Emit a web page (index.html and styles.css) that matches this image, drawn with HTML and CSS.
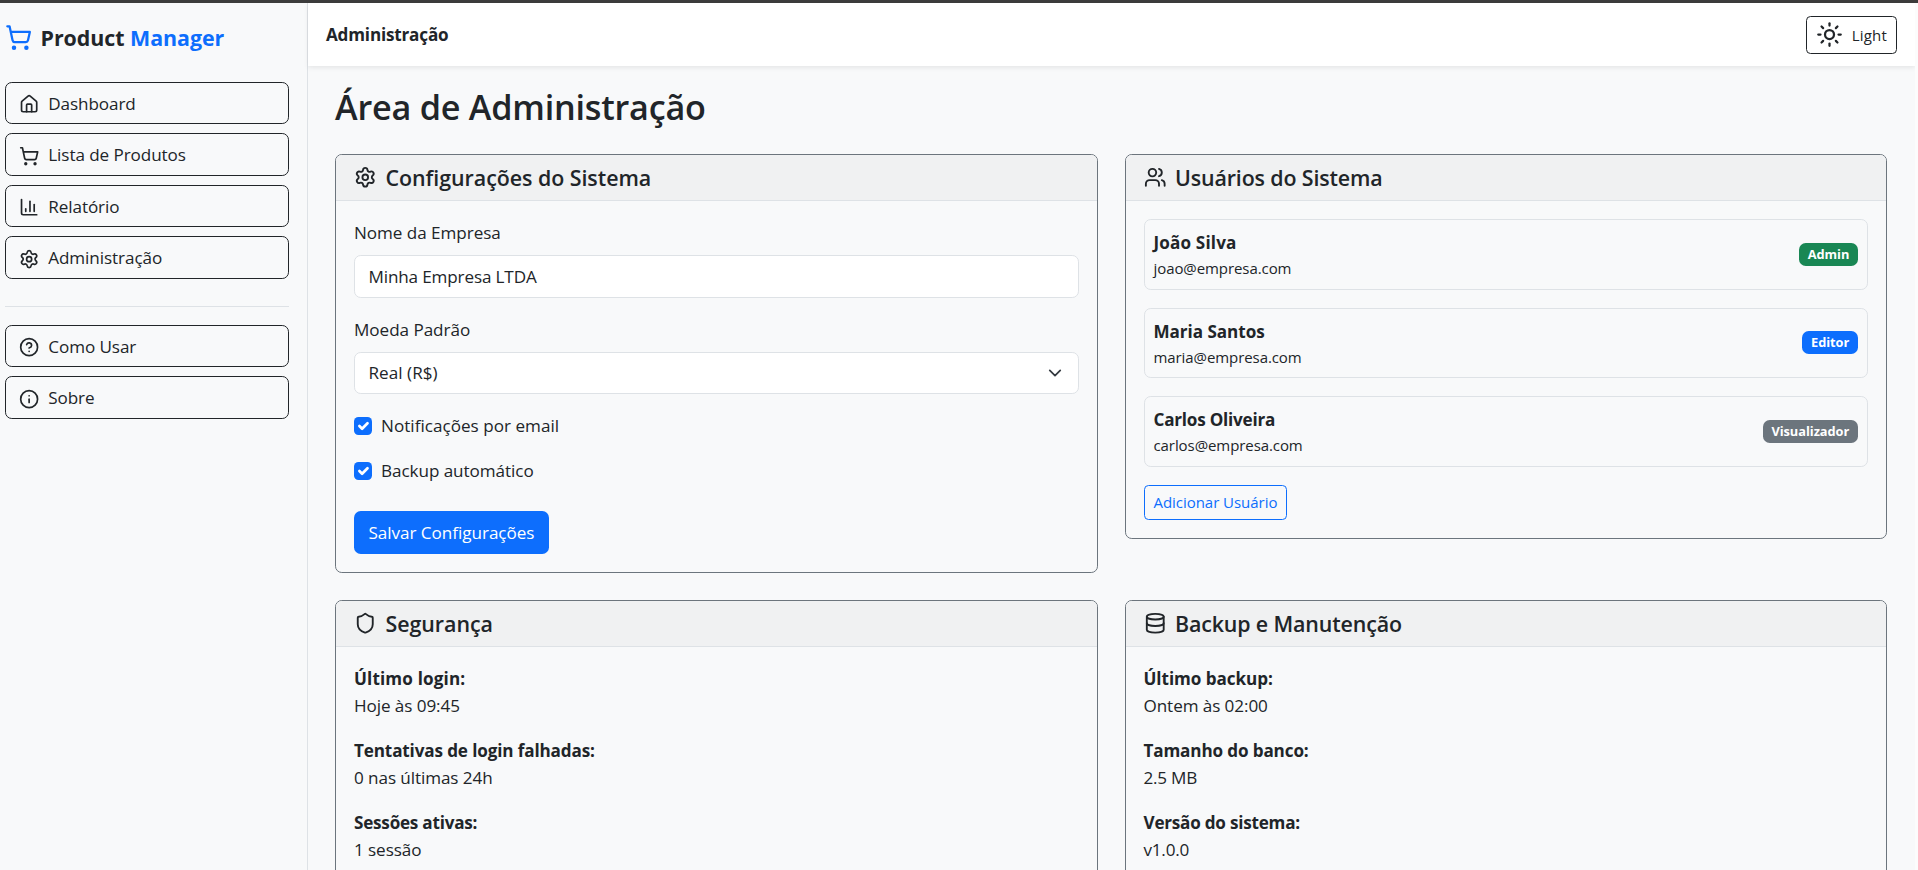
FILE: index.html
```html
<!DOCTYPE html>
<html lang="pt-BR">
<head>
<meta charset="utf-8">
<title>Product Manager - Administração</title>
<link rel="stylesheet" href="styles.css">
</head>
<body>
<svg class="defs" aria-hidden="true">
  <symbol id="i-cart" viewBox="0 0 24 24"><circle cx="8" cy="21" r="1"/><circle cx="19" cy="21" r="1"/><path d="M2.05 2.05h2l2.66 12.42a2 2 0 0 0 2 1.58h9.78a2 2 0 0 0 1.95-1.57l1.65-7.43H5.12"/></symbol>
  <symbol id="i-gear" viewBox="0 0 24 24"><path d="M9.671 4.136a2.34 2.34 0 0 1 4.659 0 2.34 2.34 0 0 0 3.319 1.915 2.34 2.34 0 0 1 2.33 4.033 2.34 2.34 0 0 0 0 3.831 2.34 2.34 0 0 1-2.33 4.033 2.34 2.34 0 0 0-3.319 1.915 2.34 2.34 0 0 1-4.659 0 2.34 2.34 0 0 0-3.32-1.915 2.34 2.34 0 0 1-2.33-4.033 2.34 2.34 0 0 0 0-3.831A2.34 2.34 0 0 1 6.35 6.051a2.34 2.34 0 0 0 3.319-1.915"/><circle cx="12" cy="12" r="3"/></symbol>
</svg>
<div class="topstrip"></div>
<div class="app">
  <aside class="sidebar">
    <div class="brand">
      <svg class="icon icon-lg"><use href="#i-cart"/></svg>
      <span class="brand-name">Product <span class="accent">Manager</span></span>
    </div>
    <nav class="nav">
      <a class="nav-btn"><svg class="icon" viewBox="0 0 24 24"><path d="M15 21v-8a1 1 0 0 0-1-1h-4a1 1 0 0 0-1 1v8"/><path d="M3 10a2 2 0 0 1 .709-1.528l7-5.999a2 2 0 0 1 2.582 0l7 5.999A2 2 0 0 1 21 10v9a2 2 0 0 1-2 2H5a2 2 0 0 1-2-2z"/></svg><span>Dashboard</span></a>
      <a class="nav-btn"><svg class="icon"><use href="#i-cart"/></svg><span>Lista de Produtos</span></a>
      <a class="nav-btn"><svg class="icon" viewBox="0 0 24 24"><path d="M3 3v16a2 2 0 0 0 2 2h16"/><path d="M18 17V9"/><path d="M13 17V5"/><path d="M8 17v-3"/></svg><span>Relatório</span></a>
      <a class="nav-btn"><svg class="icon"><use href="#i-gear"/></svg><span>Administração</span></a>
    </nav>
    <hr class="divider">
    <nav class="nav">
      <a class="nav-btn"><svg class="icon" viewBox="0 0 24 24"><circle cx="12" cy="12" r="10"/><path d="M9.09 9a3 3 0 0 1 5.83 1c0 2-3 3-3 3"/><path d="M12 17h.01"/></svg><span>Como Usar</span></a>
      <a class="nav-btn"><svg class="icon" viewBox="0 0 24 24"><circle cx="12" cy="12" r="10"/><path d="M12 16v-4"/><path d="M12 8h.01"/></svg><span>Sobre</span></a>
    </nav>
  </aside>
  <div class="main">
    <header class="topbar">
      <span class="topbar-title">Administração</span>
      <button class="theme-btn"><svg class="icon icon-lg" viewBox="0 0 24 24"><circle cx="12" cy="12" r="4"/><path d="M12 2v2"/><path d="M12 20v2"/><path d="m4.93 4.93 1.41 1.41"/><path d="m17.66 17.66 1.41 1.41"/><path d="M2 12h2"/><path d="M20 12h2"/><path d="m6.34 17.66-1.41 1.41"/><path d="m19.07 4.93-1.41 1.41"/></svg><span>Light</span></button>
    </header>
    <main class="content">
      <h1 class="page-title">Área de Administração</h1>
      <div class="cards">
        <section class="card">
          <h2 class="card-head"><svg class="icon icon-md"><use href="#i-gear"/></svg><span>Configurações do Sistema</span></h2>
          <div class="card-body">
            <label class="label">Nome da Empresa</label>
            <div class="control">Minha Empresa LTDA</div>
            <label class="label">Moeda Padrão</label>
            <div class="control select"><span>Real (R$)</span><svg class="chevron" viewBox="0 0 16 16"><path d="m2 5 6 6 6-6"/></svg></div>
            <label class="check"><span class="box"><svg viewBox="0 0 20 20"><path d="m6 10 3 3 6-6"/></svg></span><span>Notificações por email</span></label>
            <label class="check"><span class="box"><svg viewBox="0 0 20 20"><path d="m6 10 3 3 6-6"/></svg></span><span class="tight">Backup automático</span></label>
            <button class="btn-primary">Salvar Configurações</button>
          </div>
        </section>
        <section class="card">
          <h2 class="card-head snug"><svg class="icon icon-md" viewBox="0 0 24 24"><path d="M16 21v-2a4 4 0 0 0-4-4H6a4 4 0 0 0-4 4v2"/><path d="M16 3.128a4 4 0 0 1 0 7.744"/><path d="M22 21v-2a4 4 0 0 0-3-3.87"/><circle cx="9" cy="7" r="4"/></svg><span>Usuários do Sistema</span></h2>
          <div class="card-body">
            <div class="user"><div><div class="name loose">João Silva</div><div class="mail">joao@empresa.com</div></div><span class="badge green">Admin</span></div>
            <div class="user"><div><div class="name">Maria Santos</div><div class="mail">maria@empresa.com</div></div><span class="badge blue">Editor</span></div>
            <div class="user"><div><div class="name tighter">Carlos Oliveira</div><div class="mail">carlos@empresa.com</div></div><span class="badge gray">Visualizador</span></div>
            <button class="btn-outline">Adicionar Usuário</button>
          </div>
        </section>
        <section class="card">
          <h2 class="card-head"><svg class="icon icon-md" viewBox="0 0 24 24"><path d="M20 13c0 5-3.5 7.5-7.66 8.95a1 1 0 0 1-.67-.01C7.5 20.5 4 18 4 13V6a1 1 0 0 1 1-1c2 0 4.500-1.200 6.240-2.720a1.170 1.170 0 0 1 1.520 0C14.510 3.810 17 5 19 5a1 1 0 0 1 1 1z"/></svg><span>Segurança</span></h2>
          <div class="card-body">
            <p class="fact"><strong class="loose">Último login:</strong><br>Hoje às 09:45</p>
            <p class="fact"><strong>Tentativas de login falhadas:</strong><br>0 nas últimas 24h</p>
            <p class="fact"><strong class="tighter">Sessões ativas:</strong><br>1 sessão</p>
          </div>
        </section>
        <section class="card">
          <h2 class="card-head snug"><svg class="icon icon-md" viewBox="0 0 24 24"><ellipse cx="12" cy="5" rx="9" ry="3"/><path d="M3 5v14a9 3 0 0 0 18 0V5"/><path d="M3 12a9 3 0 0 0 18 0"/></svg><span>Backup e Manutenção</span></h2>
          <div class="card-body">
            <p class="fact"><strong class="tight">Último backup:</strong><br>Ontem às 02:00</p>
            <p class="fact"><strong>Tamanho do banco:</strong><br><span class="tighter">2.5 MB</span></p>
            <p class="fact"><strong class="tighter">Versão do sistema:</strong><br><span class="tighter">v1.0.0</span></p>
          </div>
        </section>
      </div>
    </main>
  </div>
  <div class="gutter"></div>
</div>
</body>
</html>
```
FILE: styles.css
```css
* { box-sizing: border-box; }
body {
  margin: 0;
  height: 870px;
  overflow: hidden;
  display: flex;
  flex-direction: column;
  background: #f8f9fa;
  color: #212529;
  font-family: "Open Sans", "Noto Sans", sans-serif;
  font-size: 17.1px;
  line-height: 27px;
  letter-spacing: -0.04px;
}
button { font: inherit; letter-spacing: inherit; color: inherit; background: none; margin: 0; }
.defs { display: none; }
.icon {
  width: 20.25px;
  height: 20.25px;
  flex: none;
  fill: none;
  stroke: currentColor;
  stroke-width: 2;
  stroke-linecap: round;
  stroke-linejoin: round;
}
.icon-md { width: 22.5px; height: 22.5px; }
.icon-lg { width: 27px; height: 27px; }

.topstrip { height: 3px; flex: none; background: #3c3c3c; }
.app { flex: 1; min-height: 0; display: flex; }

.sidebar {
  width: 308px;
  flex: none;
  padding: 15px 18px 0 5px;
  border-right: 1px solid #dee2e6;
}
.brand { display: flex; align-items: center; gap: 8.5px; height: 38px; margin-bottom: 25.75px; }
.brand .icon { color: #0d6efd; }
.brand-name { font-size: 21.4px; font-weight: 700; }
.accent { color: #0d6efd; }
.nav { display: flex; flex-direction: column; gap: 9px; letter-spacing: -0.08px; }
.nav-btn {
  display: flex;
  align-items: center;
  gap: 9px;
  height: 42.5px;
  padding: 0 13px;
  border: 1px solid #212529;
  border-radius: 6.75px;
}
.nav-btn .icon { margin-top: 3px; }
.divider { margin: 27px 0 18px; border: 0; border-top: 1px solid #dee2e6; }

.main { flex: 1; min-width: 0; display: flex; flex-direction: column; }
.gutter { width: 3px; background: #fcfcfc; }
.topbar {
  height: 63px;
  flex: none;
  display: flex;
  align-items: center;
  justify-content: space-between;
  padding: 0 18px;
  background: #fff;
  box-shadow: 0 2px 4.5px rgba(0, 0, 0, 0.075);
}
.topbar-title { font-weight: 700; letter-spacing: -0.18px; }
.theme-btn {
  display: flex;
  align-items: center;
  gap: 9px;
  height: 38px;
  padding: 2px 9px 0;
  border: 1px solid #212529;
  border-radius: 4.5px;
  font-size: 15px;
  letter-spacing: 0.2px;
}
.theme-btn .icon { margin-bottom: 2px; }

.content { padding: 19px 28px 0 27px; }
.page-title {
  margin: 0 0 26px;
  font-size: 34.2px;
  font-weight: 600;
  line-height: 43px;
  letter-spacing: -0.22px;
}
.cards {
  display: grid;
  grid-template-columns: 1fr 1fr;
  gap: 27px;
  align-items: start;
}
.card { border: 1px solid #6c757d; border-radius: 6.75px; overflow: hidden; }
.card-head {
  display: flex;
  align-items: center;
  gap: 9px;
  height: 46px;
  margin: 0;
  padding: 0 18px;
  background: #f0f1f2;
  border-bottom: 1px solid #dee2e6;
  font-size: 21.4px;
  font-weight: 600;
}
.snug { letter-spacing: -0.14px; }
.card-body { padding: 18px; }
.label { display: block; margin-bottom: 9px; }
.control {
  height: 42.5px;
  margin-bottom: 18px;
  padding: 7px 13.5px;
  background: #fff;
  border: 1px solid #dee2e6;
  border-radius: 6.75px;
  letter-spacing: -0.14px;
}
.select { display: flex; align-items: center; justify-content: space-between; padding-right: 15.5px; letter-spacing: 0.04px; }
.chevron { width: 14px; height: 14px; fill: none; stroke: #343a40; stroke-width: 2; stroke-linecap: round; stroke-linejoin: round; }
.check { display: flex; align-items: center; gap: 9px; margin-bottom: 18px; letter-spacing: 0.02px; }
.tight { letter-spacing: -0.06px; }
.tighter { letter-spacing: -0.22px; }
.loose { letter-spacing: 0.15px; }
.box { width: 18px; height: 18px; border-radius: 4.5px; background: #0d6efd; display: flex; }
.box svg { width: 18px; height: 18px; fill: none; stroke: #fff; stroke-width: 3; stroke-linecap: round; stroke-linejoin: round; }
.btn-primary {
  display: block;
  height: 42.5px;
  margin-top: 27px;
  padding: 0 14.5px;
  border: 0;
  border-radius: 6.75px;
  background: #0d6efd;
  color: #fff;
}
.user {
  display: flex;
  align-items: center;
  justify-content: space-between;
  margin-bottom: 18px;
  padding: 9px;
  border: 1px solid #dee2e6;
  border-radius: 6.75px;
}
.name { font-weight: 700; }
.mail { padding-top: 1px; font-size: 15px; line-height: 22.6px; letter-spacing: -0.08px; }
.badge {
  padding: 0 8.75px;
  border-radius: 6.75px;
  color: #fff;
  font-size: 12.8px;
  font-weight: 700;
  line-height: 23px;
}
.green { background: #198754; }
.blue { background: #0d6efd; }
.gray { background: #6c757d; }
.btn-outline {
  display: block;
  height: 35px;
  padding: 1px 9px 0;
  border: 1px solid #0d6efd;
  border-radius: 4.5px;
  color: #0d6efd;
  font-size: 15px;
}
.fact { margin: 0 0 18px; letter-spacing: -0.08px; }
.fact strong { font-weight: 700; }
.fact strong:not([class]) { letter-spacing: -0.13px; }
```
